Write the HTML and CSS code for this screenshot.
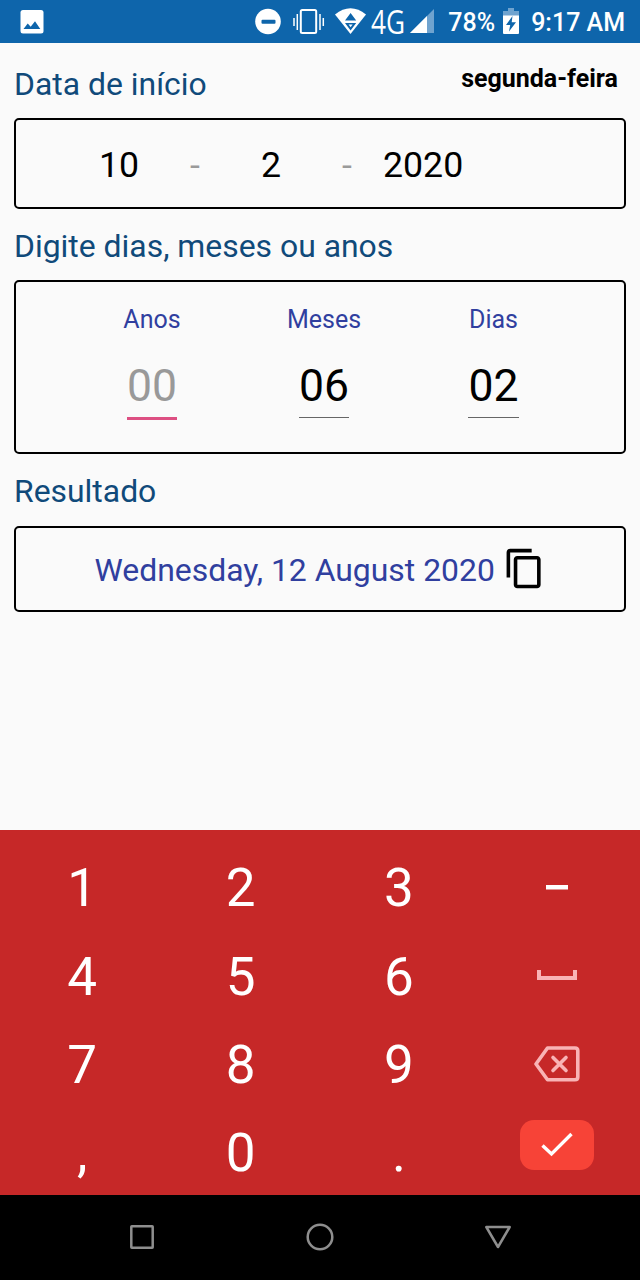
FILE: index.html
```html
<!DOCTYPE html>
<html lang="pt">

<head>
    <meta charset="utf-8">
    <title>Data</title>
    <link rel="stylesheet" href="styles.css">
</head>
<body>
    <div class="status">
        <svg class="icon-image" width="24" height="24" viewBox="0 0 24 24">
            <rect x="0.5" y="0" width="23" height="23.5" rx="2.5" fill="#fff"/>
            <path d="M3.5 19l4.2-5.5 3 3.3 4.3-5.5 5.3 7.7z" fill="#0e65ab"/>
        </svg>
        <div class="status-right">
            <svg width="186" height="42" viewBox="250 0 186 42">
                <circle cx="268" cy="21.5" r="12.8" fill="#fff"/>
                <rect x="261.5" y="19.7" width="14" height="4" rx="1" fill="#0e65ab"/>
                <rect x="300.8" y="10" width="15.4" height="23" rx="1.5" fill="none" stroke="#fff" stroke-width="2"/>
                <path d="M294 18v8M297.3 14v16M320 14v16M323.3 18v8" stroke="#fff" stroke-width="1.5"/>
                <path d="M335 14.5Q350.5 2 366 14.5L350.5 34z" fill="#fff"/>
                <path d="M345 20.5h11.2l-5.6-7.5zM345 23h11.2l-5.6 7.5z" fill="#0e65ab"/>
                <path d="M348.6 24.6h4l-2 2.7z" fill="#fff"/>
                <text class="net" x="371" y="33.5" textLength="34" lengthAdjust="spacingAndGlyphs">4G</text>
                <path d="M434 9v24h-24z" fill="#6fa3cf"/>
                <path d="M427 16v17h-17z" fill="#fff"/>
            </svg>
            <span class="battery-text">78%</span>
            <svg class="battery" width="16" height="27" viewBox="0 0 16 27">
                <path d="M5 0h6v3h5v5H0V3h5z" fill="#6fa3cf"/>
                <path d="M0 7.5h16V25q0 1-1 1H1q-1 0-1-1z" fill="#fff"/>
                <path d="M9.5 8L3 17h4.2L6 23.5l7-9.2H8.7z" fill="#0e65ab"/>
            </svg>
            <span class="clock">9:17 AM</span>
        </div>
    </div>

    <div class="content">
        <div class="title title-first">
            <span>Data de início</span>
            <b class="weekday">segunda-feira</b>
        </div>
        <div class="box box-date">
            <span>10</span>
            <span class="dash">-</span>
            <span>2</span>
            <span class="dash">-</span>
            <span class="year">2020</span>
        </div>

        <div class="title">Digite dias, meses ou anos</div>
        <div class="box box-fields">
            <div class="field">
                <label>Anos</label>
                <span class="value empty">00</span>
            </div>
            <div class="field">
                <label>Meses</label>
                <span class="value">06</span>
            </div>
            <div class="field">
                <label>Dias</label>
                <span class="value">02</span>
            </div>
        </div>

        <div class="title title-last">Resultado</div>
        <div class="box box-result">
            <span>Wednesday, 12 August 2020</span>
            <svg class="icon-copy" width="43" height="43" viewBox="0 0 24 24">
                <path d="M16 1H4c-1.1 0-2 .9-2 2v14h2V3h12V1zm3 4H8c-1.1 0-2 .9-2 2v14c0 1.1.9 2 2 2h11c1.1 0 2-.9 2-2V7c0-1.1-.9-2-2-2zm0 16H8V7h11v14z"/>
            </svg>
        </div>
    </div>

    <div class="keyboard">
        <div class="key">1</div>
        <div class="key">2</div>
        <div class="key">3</div>
        <div class="key">
            <svg class="icon-minus" width="22" height="5"><rect width="22" height="4.5" fill="#fff"/></svg>
        </div>
        <div class="key">4</div>
        <div class="key">5</div>
        <div class="key">6</div>
        <div class="key">
            <svg class="icon-space" width="40" height="10"><path d="M2 0v8h36V0" fill="none" stroke="#f9b3b5" stroke-width="4"/></svg>
        </div>
        <div class="key">7</div>
        <div class="key">8</div>
        <div class="key">9</div>
        <div class="key">
            <svg class="icon-back" width="46" height="36" viewBox="0 0 46 36" fill="none" stroke="#f9b3b5" stroke-linejoin="round" stroke-linecap="round">
                <path d="M13.5 2H41q2.8 0 2.8 2.8V31q0 2.8-2.8 2.8H13.5L2 18z" stroke-width="3.6"/>
                <path d="M19 11.500l13 13M32 11.500l-13 13" stroke-width="3.6"/>
            </svg>
        </div>
        <div class="key">,</div>
        <div class="key">0</div>
        <div class="key">.</div>
        <div class="key">
            <div class="enter">
                <svg width="32" height="26" viewBox="0 0 32 26"><path d="M1.5 13.5l9 8.5L30.5 2" fill="none" stroke="#fff" stroke-width="3.4"/></svg>
            </div>
        </div>
    </div>

    <div class="navbar">
        <svg width="28" height="28" viewBox="0 0 28 28"><rect x="3.3" y="3.3" width="21.4" height="21.4" rx="0.5"/></svg>
        <svg width="28" height="28" viewBox="0 0 28 28"><circle cx="14" cy="14" r="12.3"/></svg>
        <svg width="28" height="28" viewBox="0 0 28 28"><path d="M2.3 4h23.4L14 24z"/></svg>
    </div>
</body>

</html>
```
FILE: styles.css
```css
body {
    margin: 0;
    width: 640px;
    height: 1280px;
    overflow: hidden;
    display: flex;
    flex-direction: column;
    background-color: #fafafa;
    font-family: Roboto, sans-serif;
}

svg {
    display: block;
    flex: none;
}

/* Status bar */
.status {
    box-sizing: border-box;
    height: 42.5px;
    flex: none;
    padding: 0 15px 0 20px;
    display: flex;
    justify-content: space-between;
    background-color: #0e65ab;
    color: white;
    font-size: 25px;
    font-weight: 500;
    line-height: 46px;
}
.icon-image {
    margin-top: 10px;
}
.status-right {
    display: flex;
}
.net {
    font-family: "Open Sans", sans-serif;
    font-size: 32px;
    font-weight: 400;
    fill: white;
}
.battery-text {
    margin-left: 12px;
}
.battery {
    margin: 8px 12px 0 8px;
}

.content {
    padding: 0 14px;
    height: 787.5px;
    flex: none;
}

.title {
    box-sizing: border-box;
    height: 71px;
    padding-top: 3px;
    display: flex;
    justify-content: space-between;
    color: #104a7a;
    font-size: 31.9px;
    line-height: 68px;
}
.title-first {
    height: 75.5px;
    padding-top: 7px;
}
.title-last {
    height: 71.5px;
}
.weekday {
    margin-right: 8px;
    color: black;
    font-size: 25px;
    line-height: 58px;
}

.box {
    box-sizing: border-box;
    border: 2px solid black;
    border-radius: 5px;
}
.box-date {
    height: 91px;
    padding: 3px 0 0 65px;
    display: grid;
    grid-template-columns: repeat(5, 76px);
    align-items: center;
    text-align: center;
    font-size: 35.7px;
}
.dash {
    color: #9a9a9a;
}
.year {
    margin-left: -2px;
}
.box-fields {
    height: 174px;
    padding: 22px 46px 0 50px;
    display: grid;
    grid-template-columns: 172px 172px 167px;
}
.field {
    display: flex;
    flex-direction: column;
    align-items: center;
}
.field label {
    color: #303f9f;
    font-size: 25px;
    line-height: 32px;
}
.value {
    height: 61px;
    margin-top: 20px;
    border-bottom: 1px solid #666;
    font-size: 44.5px;
    line-height: 60px;
}
.value.empty {
    color: #999;
    border-bottom: 3px solid #dd4f82;
}
.box-result {
    height: 86px;
    padding: 2px 0 0 78.5px;
    display: flex;
    align-items: center;
    gap: 8.5px;
    color: #303f9f;
    font-size: 31.9px;
}
.icon-copy {
    fill: black;
    margin-bottom: 2px;
}

/* Numeric keyboard */
.keyboard {
    box-sizing: border-box;
    height: 364.5px;
    flex: none;
    padding: 14px 0 0 3px;
    display: grid;
    grid-template-columns: repeat(4, 158.4px);
    grid-template-rows: repeat(4, 88.4px);
    background-color: #c62828;
    color: white;
    font-size: 53px;
}
.key {
    display: flex;
    align-items: center;
    justify-content: center;
}
.icon-minus {
    margin-bottom: 2px;
}
.icon-space {
    margin-bottom: 4px;
}
.icon-back {
    margin-bottom: 2px;
}
.enter {
    width: 74px;
    height: 50px;
    margin-bottom: 17px;
    border-radius: 14px;
    display: flex;
    align-items: center;
    justify-content: center;
    background-color: #f74337;
}

.navbar {
    flex: 1;
    background-color: black;
    display: flex;
    align-items: center;
    justify-content: center;
    gap: 150px;
}
.navbar svg {
    fill: none;
    stroke: #8e8e8e;
    stroke-width: 2.5;
    stroke-linejoin: round;
}
```
